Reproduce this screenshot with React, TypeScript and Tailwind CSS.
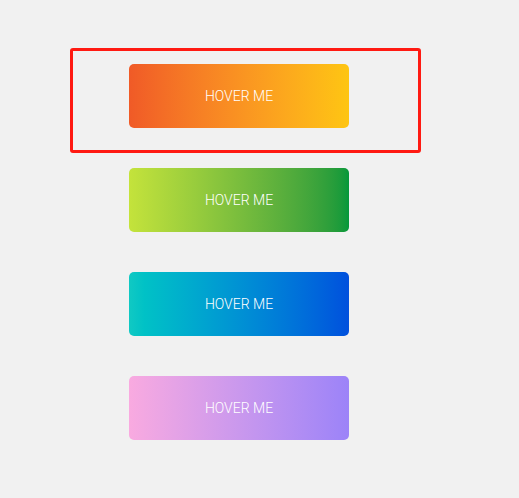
const buttons = [
  'bg-gradient-to-r from-[#f05a27] to-[#fec512]',
  'bg-gradient-to-r from-[#c4e33b] to-[#04983a]',
  'bg-gradient-to-r from-[#10c9c3] to-[#0350dd]',
  'bg-gradient-to-r from-[#f9aae0] to-[#9c83f8]',
];

export default function App() {
  return (
    <div className="relative min-h-[498px] w-full bg-[#f1f1f1] font-['Roboto',sans-serif]">
      {/* selection highlight over the first button */}
      <div className="absolute left-[70px] top-[48px] h-[105px] w-[351px] rounded-[3px] border-[3px] border-[#ff1a12]" />
      <div className="flex flex-col gap-10 pl-[129px] pt-[64px]">
        {buttons.map((bg, i) => (
          <button
            key={i}
            className={`flex h-16 w-[220px] items-center justify-center rounded-[5px] text-[14px] font-light text-white ${bg}`}
          >
            HOVER ME
          </button>
        ))}
      </div>
    </div>
  );
}
